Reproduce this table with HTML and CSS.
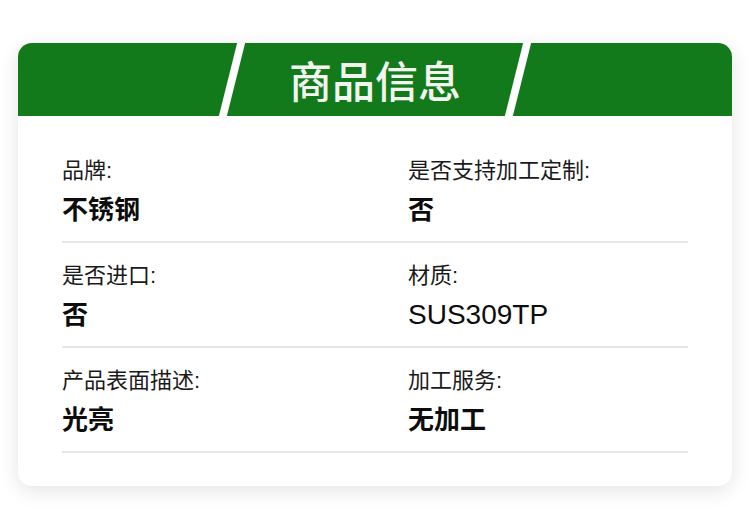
FILE: index.html
```html
<!DOCTYPE html>
<html lang="zh">
<head>
<meta charset="utf-8">
<link rel="stylesheet" href="styles.css">
</head>
<body>
<div class="card">
  <div class="header">
    <span class="stripe stripe-left"></span>
    <h1 class="title">商品信息</h1>
    <span class="stripe stripe-right"></span>
  </div>
  <div class="body">
    <div class="row">
      <div class="cell"><div class="label">品牌:</div><div class="value">不锈钢</div></div>
      <div class="cell"><div class="label">是否支持加工定制:</div><div class="value">否</div></div>
    </div>
    <div class="row">
      <div class="cell"><div class="label">是否进口:</div><div class="value">否</div></div>
      <div class="cell"><div class="label">材质:</div><div class="value latin">SUS309TP</div></div>
    </div>
    <div class="row">
      <div class="cell"><div class="label">产品表面描述:</div><div class="value">光亮</div></div>
      <div class="cell"><div class="label">加工服务:</div><div class="value">无加工</div></div>
    </div>
  </div>
</div>
</body>
</html>
```
FILE: styles.css
```css
html, body {
  margin: 0;
  padding: 0;
  background: #ffffff;
}
body {
  font-family: "Liberation Sans", "Noto Sans CJK SC", sans-serif;
  color: #111;
  padding: 43px 0 43px;
}
.card {
  margin: 0 18px;
  width: 714px;
  background: #fff;
  border-radius: 14px;
  overflow: hidden;
  box-shadow: 0 5px 20px rgba(0, 0, 0, 0.11);
}
.header {
  position: relative;
  height: 73px;
  background: #137a1b;
  display: flex;
  align-items: center;
  justify-content: center;
}
.title {
  margin: 0;
  font-size: 43px;
  font-weight: 500;
  color: #f2f4f0;
  line-height: 1;
  font-family: "Noto Sans CJK SC", sans-serif;
}
.stripe {
  position: absolute;
  top: 0;
  width: 8px;
  height: 73px;
  background: #fff;
  transform: skewX(-14deg);
}
.stripe-left { left: 210px; }
.stripe-right { left: 496px; }
.body {
  padding: 22px 44px 33px;
}
.row {
  display: grid;
  grid-template-columns: 346px 1fr;
  padding: 18px 0 13px;
  border-bottom: 2px solid #e6e6e6;
}
.label {
  font-size: 22px;
  line-height: 30px;
  color: #1a1a1a;
}
.value {
  margin-top: 6px;
  font-size: 26px;
  line-height: 36px;
  font-weight: 700;
  color: #0d0d0d;
}
.value.latin {
  font-weight: 400;
  font-size: 28px;
}
```
